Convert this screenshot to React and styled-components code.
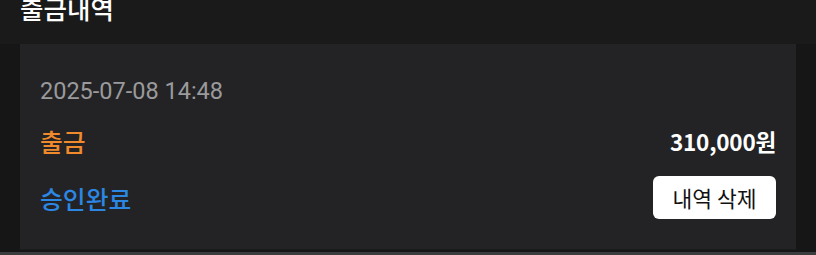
import React from "react";
import styled, { createGlobalStyle } from "styled-components";

const GlobalStyle = createGlobalStyle`
	html, body {
		margin: 0;
		padding: 0;
		background-color: #161616;
		font-family: "Noto Sans CJK KR", "Noto Sans", sans-serif;
	}
`;

const Page = styled.div`
	width: 816px;
	height: 255px;
	overflow: hidden;
	background-color: #161616;
`;

const Header = styled.div`
	height: 44px;
	padding: 0 20px;
	background-color: #1a1a1a;
	overflow: hidden;

	h2 {
		margin: -10px 0 0;
		font-size: 25.5px;
		font-weight: 500;
		line-height: 36px;
		color: #ffffff;
	}
`;

const Card = styled.div`
	margin: 0 20px;
	padding: 32px 20px 30px;
	background-color: #232325;
	display: flex;
	flex-direction: column;
	gap: 20px;
	border-bottom: 1px solid #1c1c1e;
`;

const Date = styled.div`
	font-family: Roboto, "Noto Sans", sans-serif;
	font-size: 23.5px;
	line-height: 30px;
	color: #9a9a9c;
`;

const Row = styled.div`
	display: flex;
	justify-content: space-between;
	align-items: center;
	min-height: 30px;
`;

const Label = styled.span`
	font-size: 24.8px;
	font-weight: 500;
	line-height: 30px;
	color: ${(p) => p.color};
`;

const Amount = styled.span`
	font-size: 22.5px;
	font-weight: 700;
	line-height: 30px;
	color: #ffffff;
	letter-spacing: -0.2px;
`;

const DeleteBtn = styled.button`
	width: 123px;
	height: 43px;
	border: none;
	border-radius: 6px;
	background-color: #ffffff;
	color: #111111;
	font-family: "Noto Sans CJK KR", sans-serif;
	font-size: 21.5px;
	font-weight: 400;
	padding: 0;
	cursor: pointer;
`;

const Divider = styled.div`
	height: 3px;
	margin-top: 2px;
	background-color: #3c3c3e;
`;

const App = () => {
	return (
		<Page>
			<GlobalStyle />
			<Header>
				<h2>출금내역</h2>
			</Header>
			<Card>
				<Date>2025-07-08 14:48</Date>
				<Row>
					<Label color="#f08a2c">출금</Label>
					<Amount>310,000원</Amount>
				</Row>
				<Row>
					<Label color="#2b87e3">승인완료</Label>
					<DeleteBtn>내역 삭제</DeleteBtn>
				</Row>
			</Card>
			<Divider />
		</Page>
	);
};

export default App;
